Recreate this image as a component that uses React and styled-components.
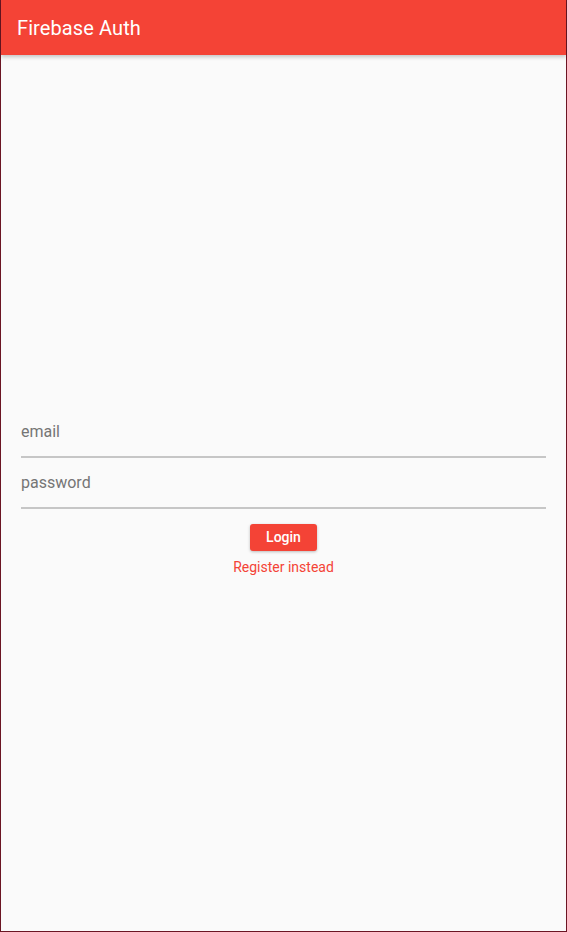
import React from 'react'
import styled, { createGlobalStyle } from 'styled-components'

const GlobalStyle = createGlobalStyle`
    html, body {
        margin: 0;
        padding: 0;
        height: 100%;
    }
    body {
        font-family: Roboto, "Noto Sans", sans-serif;
        background: #fafafa;
    }
    #root {
        height: 100%;
    }
`

const Screen = styled.div`
    box-sizing: border-box;
    height: 932px;
    display: flex;
    flex-direction: column;
    background: #fafafa;
    border: 1px solid #6b1523;
    border-top: none;
`

const AppBar = styled.header`
    height: 55px;
    flex-shrink: 0;
    display: flex;
    align-items: center;
    padding: 0 16px;
    background: #f44336;
    box-shadow: 0 2px 4px rgba(0, 0, 0, 0.22);
    position: relative;
    z-index: 1;
`

const Title = styled.h1`
    margin: 0;
    color: #fff;
    font-size: 20px;
    font-weight: 400;
    letter-spacing: 0.1px;
`

const Body = styled.main`
    flex: 1;
    display: flex;
    flex-direction: column;
    justify-content: center;
    padding: 0 20px 5px;
`

const Field = styled.label`
    display: block;
    border-bottom: 2px solid #c6c6c6;
    padding: 14px 0 13px;
`

const Input = styled.input`
    width: 100%;
    border: none;
    outline: none;
    background: transparent;
    padding: 0;
    font-family: inherit;
    font-size: 16px;
    line-height: 22px;
    color: #212121;

    &::placeholder {
        color: #757575;
    }
`

const Actions = styled.div`
    display: flex;
    flex-direction: column;
    align-items: center;
    padding-top: 15px;
`

const Button = styled.button`
    height: 27px;
    padding: 0 16px;
    border: none;
    border-radius: 3px;
    background: #f44336;
    color: #fff;
    font-family: inherit;
    font-size: 14px;
    font-weight: 500;
    box-shadow: 0 1px 3px rgba(0, 0, 0, 0.25);
`

const TextButton = styled.button`
    margin-top: 8px;
    border: none;
    background: transparent;
    padding: 0;
    color: #f44336;
    font-family: inherit;
    font-size: 14px;
    line-height: 16px;
`

const App = () => {
    return (
        <>
            <GlobalStyle />
            <Screen>
                <AppBar>
                    <Title>Firebase Auth</Title>
                </AppBar>
                <Body>
                    <Field>
                        <Input placeholder="email" />
                    </Field>
                    <Field>
                        <Input type="password" placeholder="password" />
                    </Field>
                    <Actions>
                        <Button>Login</Button>
                        <TextButton>Register instead</TextButton>
                    </Actions>
                </Body>
            </Screen>
        </>
    )
}

export default App
